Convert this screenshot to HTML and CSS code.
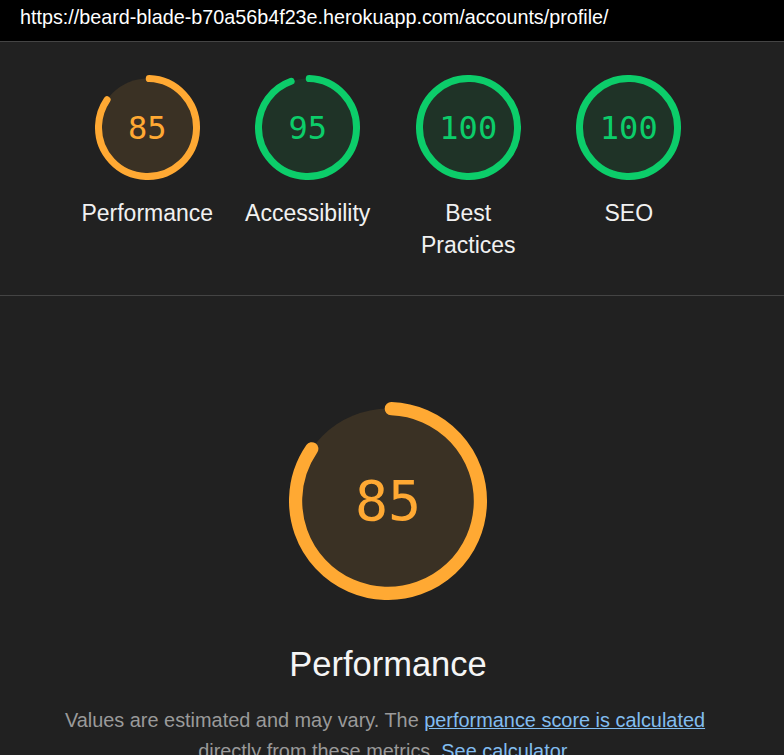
FILE: index.html
```html
<!DOCTYPE html>
<html>
<head>
<meta charset="utf-8">
<link rel="stylesheet" href="styles.css">
</head>
<body>
<header class="topbar">https://beard-blade-b70a56b4f23e.herokuapp.com/accounts/profile/</header>
<section class="summary">
  <div class="gauges">
    <div class="gauge average">
      <div class="ring">
        <svg viewBox="0 0 120 120"><circle class="base" cx="60" cy="60" r="56"/><circle class="arc" cx="60" cy="60" r="56" stroke-dasharray="295.08 351.86" transform="rotate(-87.95 60 60)"/></svg>
        <span class="score">85</span>
      </div>
      <div class="label">Performance</div>
    </div>
    <div class="gauge pass">
      <div class="ring">
        <svg viewBox="0 0 120 120"><circle class="base" cx="60" cy="60" r="56"/><circle class="arc" cx="60" cy="60" r="56" stroke-dasharray="330.27 351.86" transform="rotate(-87.95 60 60)"/></svg>
        <span class="score">95</span>
      </div>
      <div class="label">Accessibility</div>
    </div>
    <div class="gauge pass">
      <div class="ring">
        <svg viewBox="0 0 120 120"><circle class="base" cx="60" cy="60" r="56"/><circle class="arc" cx="60" cy="60" r="56" stroke-dasharray="351.86 351.86" transform="rotate(-87.95 60 60)"/></svg>
        <span class="score">100</span>
      </div>
      <div class="label">Best Practices</div>
    </div>
    <div class="gauge pass">
      <div class="ring">
        <svg viewBox="0 0 120 120"><circle class="base" cx="60" cy="60" r="56"/><circle class="arc" cx="60" cy="60" r="56" stroke-dasharray="351.86 351.86" transform="rotate(-87.95 60 60)"/></svg>
        <span class="score">100</span>
      </div>
      <div class="label">SEO</div>
    </div>
  </div>
</section>
<section class="category">
  <div class="gauge average big">
    <div class="ring">
      <svg viewBox="0 0 120 120"><circle class="base" cx="60" cy="60" r="56"/><circle class="arc" cx="60" cy="60" r="56" stroke-dasharray="295.08 351.86" transform="rotate(-87.95 60 60)"/></svg>
      <span class="score">85</span>
    </div>
  </div>
  <h2 class="title">Performance</h2>
  <p class="desc">Values are estimated and may vary. The <a href="#">performance score is calculated</a> directly from these metrics. <a href="#">See calculator.</a></p>
</section>
</body>
</html>
```
FILE: styles.css
```css
html, body {
  margin: 0;
  padding: 0;
  background: #212121;
  font-family: "Liberation Sans", Arial, sans-serif;
  color: #f1f1f1;
  overflow: hidden;
}
.topbar {
  box-sizing: border-box;
  height: 42px;
  background: #000;
  color: #fff;
  font-size: 19.75px;
  line-height: 34px;
  padding-left: 20px;
  border-bottom: 1px solid #444;
}
.summary {
  border-bottom: 1px solid #444;
  padding: 33px 0 34px;
}
.gauges {
  display: flex;
  margin-left: 67px;
  width: 642px;
}
.gauge {
  width: 160.5px;
  display: flex;
  flex-direction: column;
  align-items: center;
}
.ring {
  position: relative;
  width: 105px;
  height: 105px;
}
.ring svg {
  display: block;
  width: 100%;
  height: 100%;
}
.base { stroke: none; }
.arc {
  fill: none;
  stroke-width: 8;
  stroke-linecap: round;
}
.average .base { fill: #3a3124; }
.average .arc { stroke: #ffa933; }
.average .score { color: #ffa933; }
.pass .base { fill: #1f3327; }
.pass .arc { stroke: #0ccd6a; }
.pass .score { color: #0ccd6a; }
.score {
  position: absolute;
  inset: 0;
  display: flex;
  align-items: center;
  justify-content: center;
  font-family: "DejaVu Sans Mono", "Liberation Mono", monospace;
  font-size: 32px;
}
.label {
  margin-top: 17px;
  font-size: 23px;
  line-height: 32px;
  text-align: center;
  color: #f1f1f1;
  width: 140px;
}
.category {
  display: flex;
  flex-direction: column;
  align-items: center;
  padding: 106px 8px 0 0;
}
.big { width: auto; }
.big .ring {
  width: 198px;
  height: 198px;
}
.big .score {
  font-size: 55px;
}
.title {
  margin: 44px 0 0;
  font-weight: normal;
  font-size: 34.5px;
  line-height: 40px;
  color: #f5f5f5;
}
.desc {
  margin: 21px 6px 0 0;
  width: 680px;
  text-align: center;
  font-size: 19.9px;
  line-height: 31px;
  color: #9a9a9a;
}
.desc a {
  color: #82bdf0;
  text-decoration: underline;
}
```
